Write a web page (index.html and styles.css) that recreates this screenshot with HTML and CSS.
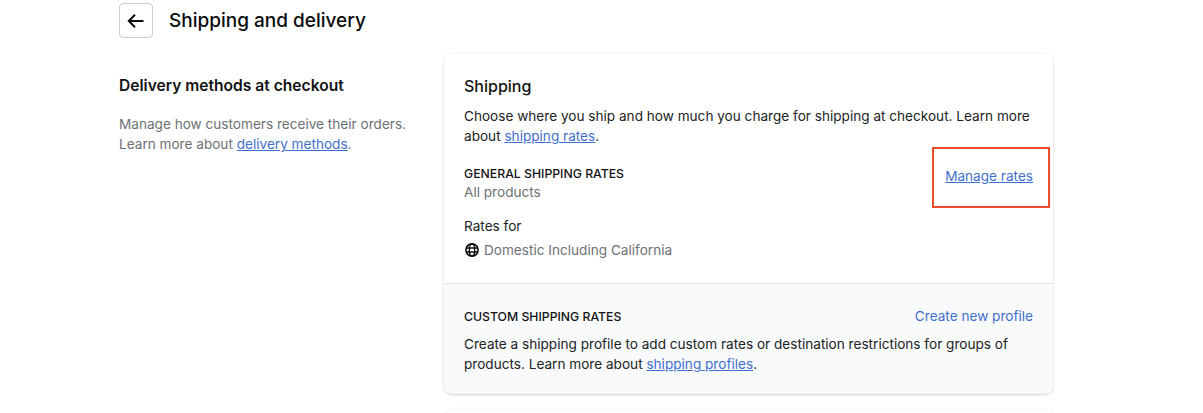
FILE: index.html
```html
<!DOCTYPE html>
<html lang="en">
<head>
    <meta charset="UTF-8">
    <meta name="viewport" content="width=device-width, initial-scale=1.0">
    <title>Shipping and delivery</title>
    <link rel="stylesheet" href="styles.css">
</head>
<body>
    <div class="page">
        <header class="page-header">
            <a class="back-button" href="#" aria-label="Back">
                <svg width="20" height="20" viewBox="0 0 20 20" fill="none" stroke="#0b0b0b" stroke-width="2">
                    <path d="M17.5 10H3M9 3.8L2.8 10L9 16.2"/>
                </svg>
            </a>
            <h1 class="page-title">Shipping and delivery</h1>
        </header>

        <div class="layout">
            <aside class="intro">
                <h2 class="intro-title">Delivery methods at checkout</h2>
                <p class="intro-text">Manage how customers receive their orders. Learn more about <a href="#">delivery methods</a>.</p>
            </aside>

            <div class="cards">
                <section class="card">
                    <div class="card-main">
                        <h2 class="card-title">Shipping</h2>
                        <p class="card-text">Choose where you ship and how much you charge for shipping at checkout. Learn more about <a href="#">shipping rates</a>.</p>

                        <div class="rates-row">
                            <div>
                                <h3 class="caps-title">GENERAL SHIPPING RATES</h3>
                                <p class="muted">All products</p>
                            </div>
                            <a class="manage-link" href="#">Manage rates</a>
                            <span class="highlight"></span>
                        </div>

                        <p class="rates-for">Rates for</p>
                        <div class="zone">
                            <svg width="16" height="16" viewBox="0 0 16 16" fill="none" stroke="#0b0b0b">
                                <circle cx="8" cy="8" r="6.1" stroke-width="1.6"/>
                                <ellipse cx="8" cy="8" rx="2.7" ry="6" stroke-width="1.3"/>
                                <path d="M2 6h12M2 10h12" stroke-width="1.3"/>
                            </svg>
                            <span class="muted">Domestic Including California</span>
                        </div>
                    </div>

                    <div class="card-footer">
                        <div class="footer-head">
                            <h3 class="caps-title">CUSTOM SHIPPING RATES</h3>
                            <a class="plain-link" href="#">Create new profile</a>
                        </div>
                        <p class="card-text footer-text">Create a shipping profile to add custom rates or destination restrictions for groups of products. Learn more about <a href="#">shipping profiles</a>.</p>
                    </div>
                </section>

                <section class="card card-next"></section>
            </div>
        </div>
    </div>
</body>
</html>
```

FILE: styles.css
```css
/* General Styling */
body {
    font-family: 'Inter', 'Liberation Sans', sans-serif;
    font-size: 13.6px;
    line-height: 20px;
    color: #202223;
    background-color: #ffffff;
    margin: 0;
    height: 413px;
    overflow: hidden;
}

h1, h2, h3, p {
    margin: 0;
}

a {
    color: #3f6fce;
}

.page {
    width: 934px;
    margin-left: 119px;
    padding-top: 3px;
}

/* Header */
.page-header {
    display: flex;
    align-items: center;
    gap: 16px;
}

.back-button {
    display: flex;
    align-items: center;
    justify-content: center;
    box-sizing: border-box;
    width: 34px;
    height: 35px;
    border: 1px solid #c9cccf;
    border-radius: 4px;
}

.page-title {
    font-size: 19px;
    line-height: 28px;
    font-weight: 500;
    color: #0b0b0b;
}

/* Two columns */
.layout {
    display: grid;
    grid-template-columns: 325px 609px;
    margin-top: 16px;
}

.intro {
    padding-top: 22px;
}

.intro-title {
    font-size: 15.6px;
    line-height: 20px;
    font-weight: 600;
    color: #111213;
}

.intro-text {
    width: 290px;
    margin-top: 18px;
    color: #6d7175;
}

/* Cards */
.cards {
    display: flex;
    flex-direction: column;
    gap: 16px;
}

.card {
    background-color: #ffffff;
    border-radius: 8px;
    box-shadow: 0 0 5px rgba(23, 24, 24, 0.05), 0 1px 2px rgba(0, 0, 0, 0.15);
    overflow: hidden;
}

.card-next {
    height: 60px;
}

.card-main {
    padding: 22px 20px 23px;
}

.card-title {
    font-size: 16px;
    line-height: 20px;
    font-weight: 500;
    color: #111213;
}

.card-text {
    margin-top: 10px;
}

.footer-text {
    margin-top: 8px;
}

.rates-row {
    position: relative;
    display: flex;
    justify-content: space-between;
    align-items: flex-start;
    margin-top: 19px;
}

.caps-title {
    font-size: 12.25px;
    line-height: 17px;
    font-weight: 500;
    color: #111213;
}

.muted {
    color: #6d7175;
}

.manage-link {
    margin-top: 1px;
}

/* Red box drawn over the screenshot */
.highlight {
    position: absolute;
    top: -18px;
    right: -17px;
    box-sizing: border-box;
    width: 118px;
    height: 61px;
    border: 2px solid #ee4b2b;
}

.rates-for {
    margin-top: 14px;
}

.zone {
    display: flex;
    align-items: center;
    gap: 4px;
    margin-top: 4px;
}

.card-footer {
    background-color: #f9fafb;
    border-top: 1px solid #e1e3e5;
    padding: 22px 20px 20px;
}

.footer-head {
    display: flex;
    justify-content: space-between;
    align-items: center;
}

.plain-link {
    text-decoration: none;
}
```
